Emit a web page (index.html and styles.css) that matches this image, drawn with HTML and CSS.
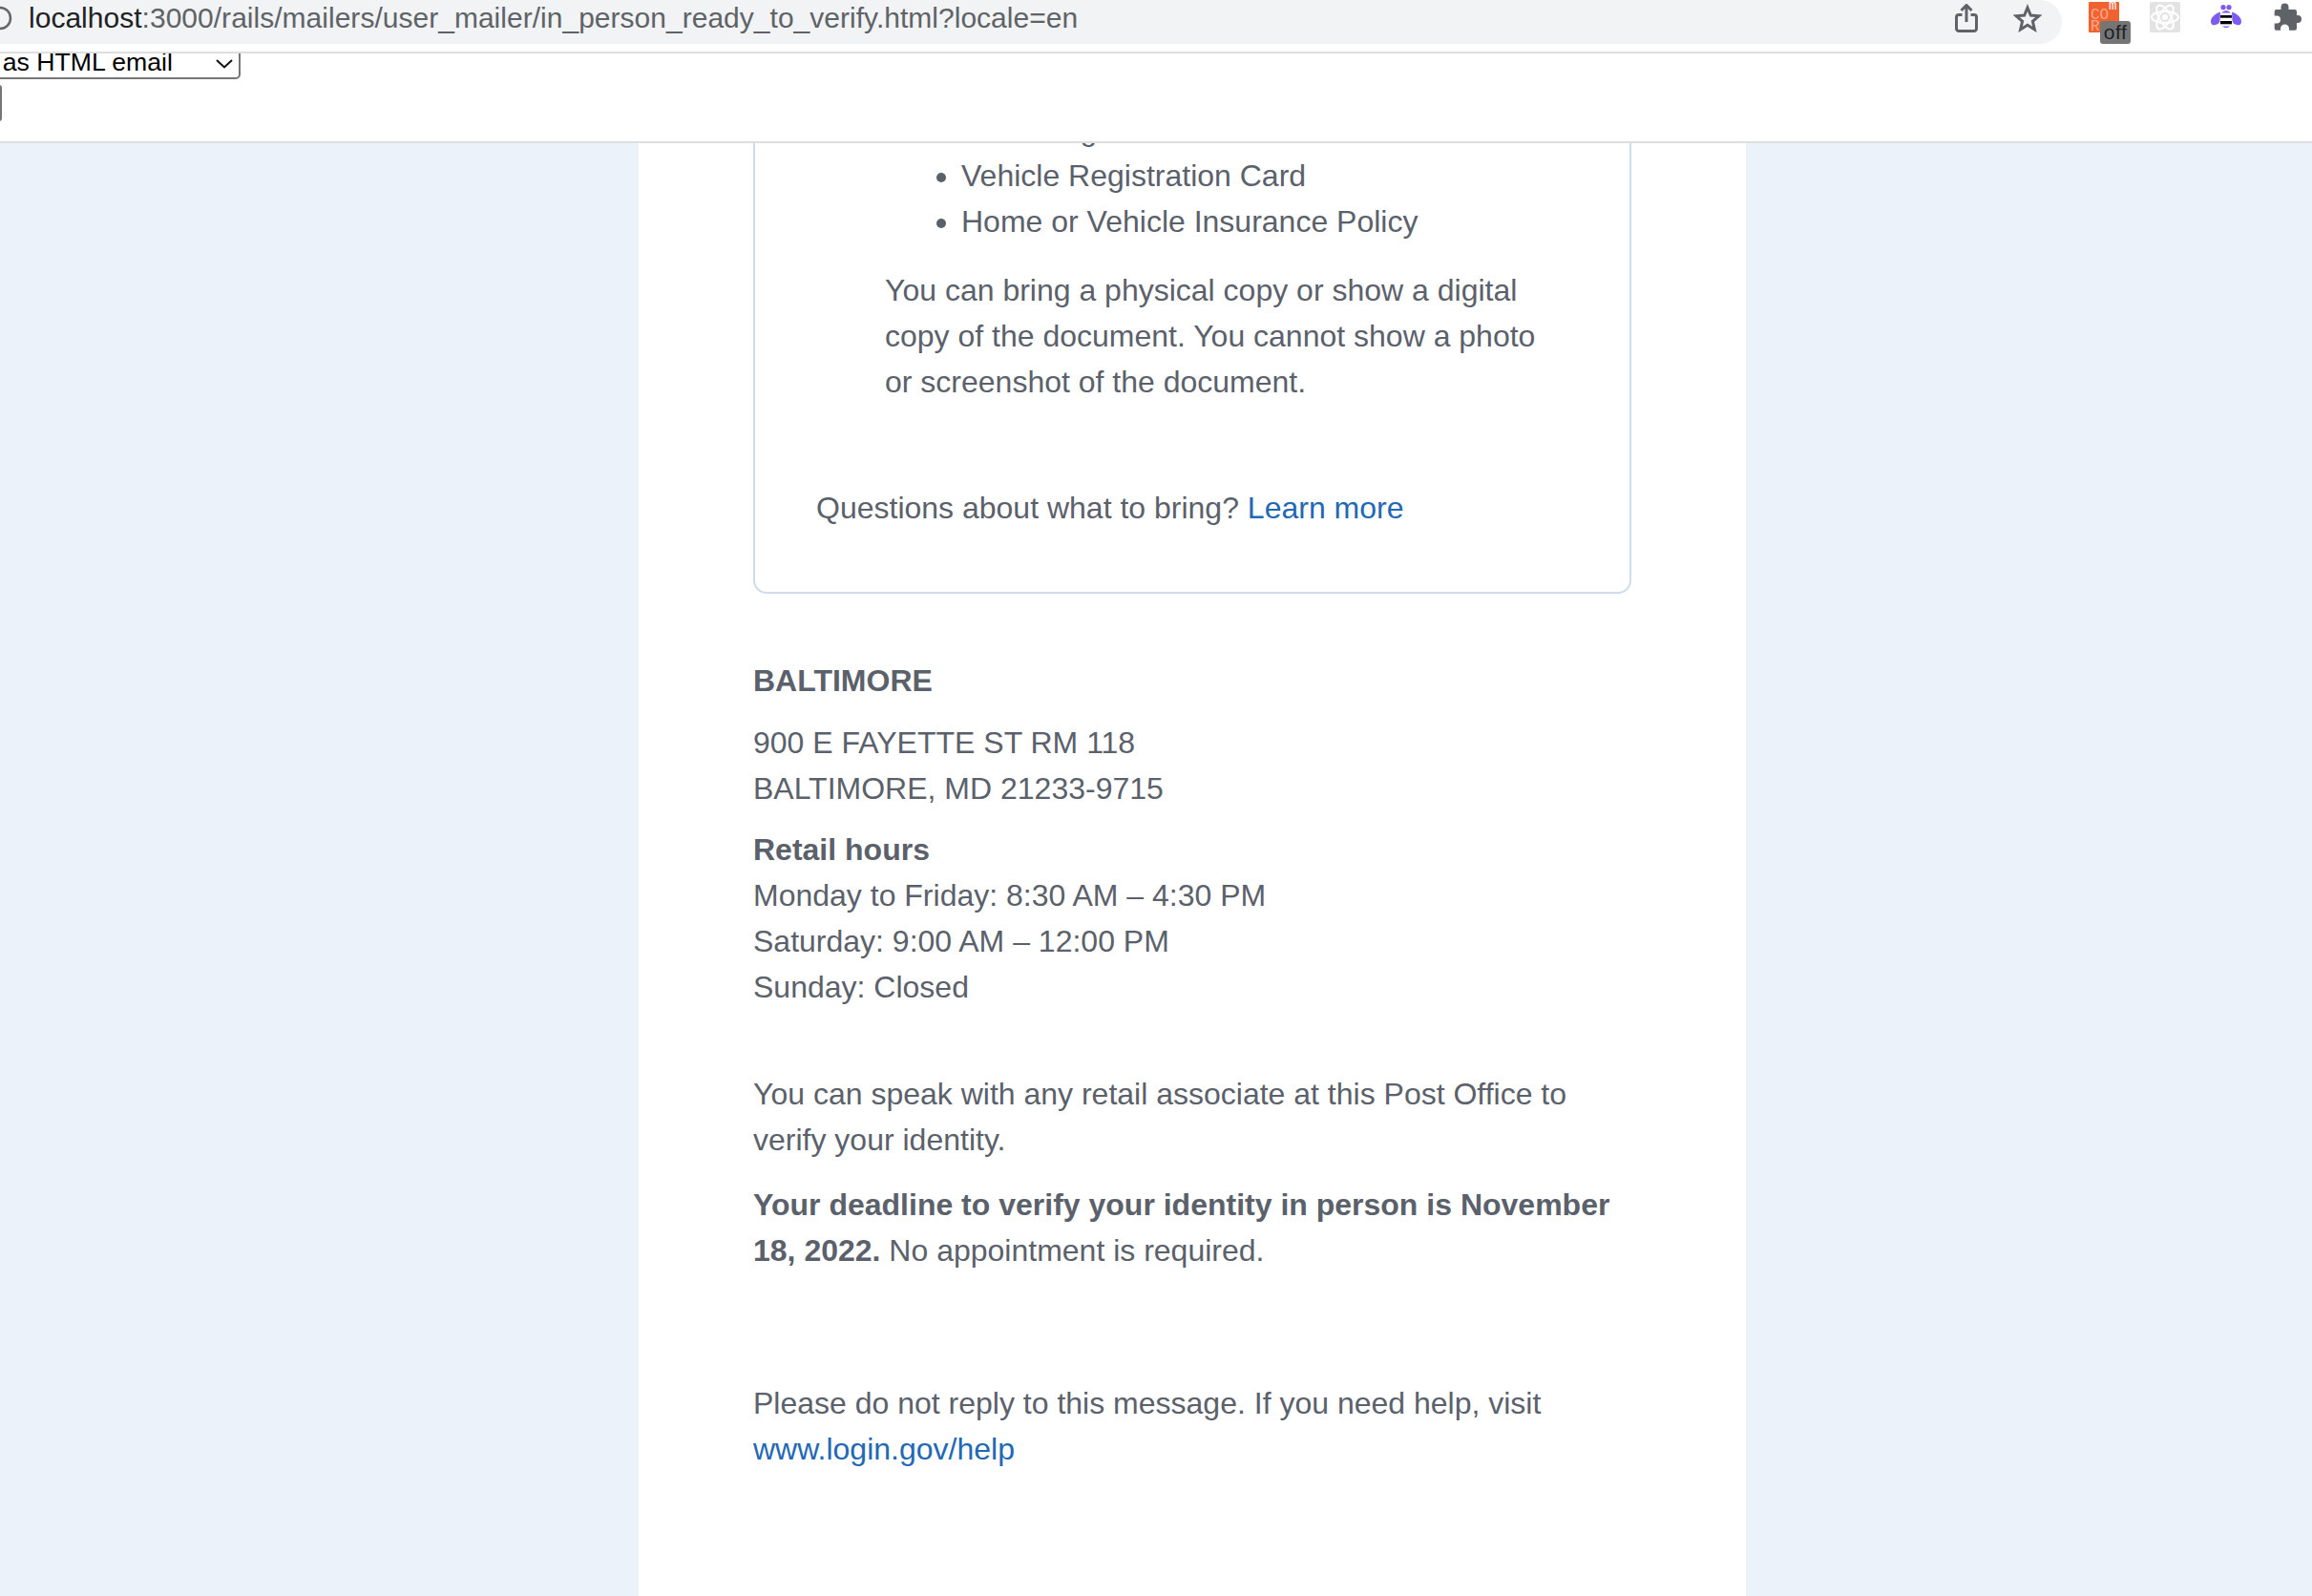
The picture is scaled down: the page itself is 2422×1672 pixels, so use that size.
FILE: index.html
```html
<!DOCTYPE html>
<html lang="en">
<head>
    <meta charset="UTF-8">
    <title>in_person_ready_to_verify</title>
    <link rel="stylesheet" href="styles.css">
</head>
<body>

    <!-- Browser toolbar -->
    <div class="browser-bar">
        <div class="address-bar">
            <svg class="reload-icon" width="14" height="30" viewBox="0 0 14 30"><circle cx="0" cy="15" r="11" fill="none" stroke="#666" stroke-width="2.500"/></svg>
            <div class="url"><span class="url-host">localhost</span>:3000/rails/mailers/user_mailer/in_person_ready_to_verify.html?locale=en</div>
            <svg class="share-icon" width="24" height="30" viewBox="0 0 24 30"><path d="M7.500 11.500H4a2.500 2.500 0 0 0-2.500 2.500v12A2.500 2.500 0 0 0 4 28.500h16a2.500 2.500 0 0 0 2.500-2.500V14a2.500 2.500 0 0 0-2.500-2.500h-3.500M12 19V2M6.500 7L12 1.500 17.500 7" fill="none" stroke="#5f6368" stroke-width="3"/></svg>
            <svg class="star-icon" width="30" height="30" viewBox="0 0 30 30"><path d="M15 4l3.300 8 8.700.7-6.600 5.700 2 8.500L15 22.300l-7.400 4.600 2-8.500L3 12.700l8.700-.7z" fill="none" stroke="#5f6368" stroke-width="3" stroke-linejoin="miter"/></svg>
        </div>
        <div class="extensions">
            <div class="ext">
                <svg width="32" height="32" viewBox="0 0 32 32"><rect width="32" height="32" rx="1" fill="#f26130"/><text x="2" y="18" class="cors-text">CO</text><text x="2" y="30" class="cors-text">R</text><text x="21" y="8" class="cors-m">m</text></svg>
                <span class="ext-badge">off</span>
            </div>
            <div class="ext">
                <svg width="32" height="32" viewBox="0 0 32 32"><rect width="32" height="32" rx="2" fill="#e3e3e3"/><g fill="none" stroke="#fff" stroke-width="2"><ellipse cx="16" cy="16" rx="14" ry="6"/><ellipse cx="16" cy="16" rx="14" ry="6" transform="rotate(60 16 16)"/><ellipse cx="16" cy="16" rx="14" ry="6" transform="rotate(120 16 16)"/></g><circle cx="16" cy="16" r="3" fill="#fff"/></svg>
            </div>
            <div class="ext">
                <svg width="32" height="32" viewBox="0 0 32 32"><g fill="#7f5af0"><circle cx="13" cy="5.700" r="2.600"/><circle cx="19" cy="5.700" r="2.600"/><path d="M10 10.500C5 12 0 16 0 20.500 0 24 3 25 5 24c3-1 4-2 4.500-4z"/><path d="M22 10.500c5 1.500 10 5.500 10 10 0 3.500-3 4.500-5 3.500-3-1-4-2-4.500-4z"/><path d="M11 11.500q5-5 10 0z"/><path d="M12 25.500h8q-4 3-8 0z"/></g><rect x="10" y="14" width="12" height="2.700" fill="#000"/><rect x="10" y="20" width="12" height="3.300" fill="#000"/></svg>
            </div>
            <div class="ext">
                <svg width="32" height="32" viewBox="0 0 32 32"><path d="M4.700 8H9.500V5.500a4 4 0 0 1 8 0V8H24a2 2 0 0 1 2 2v4h1a4 4 0 0 1 0 8h-1v5.700a2 2 0 0 1-2 2H18V28a4.500 4.500 0 0 0-9 0v1.700H4.700a2 2 0 0 1-2-2V22.500H5a4 4 0 0 0 0-8H2.700V10a2 2 0 0 1 2-2z" fill="#5f6368"/></svg>
            </div>
        </div>
    </div>

    <!-- Mailer preview header -->
    <div class="preview-head">
        <div class="select-wrap">
            <select class="format-select">
                <option>View as HTML email</option>
            </select>
            <svg class="select-chevron" width="18" height="10" viewBox="0 0 18 10"><path d="M1 1l8 7.500L17 1" fill="none" stroke="#111" stroke-width="2"/></svg>
        </div>
        <input class="to-input" type="text">
    </div>

    <!-- Email body -->
    <div class="mail-bg">
        <div class="mail-col">
            <div class="card">
                <ul class="doc-list">
                    <li>Voter Registration Card</li>
                    <li>Vehicle Registration Card</li>
                    <li>Home or Vehicle Insurance Policy</li>
                </ul>
                <p class="doc-note">You can bring a physical copy or show a digital copy of the document. You cannot show a photo or screenshot of the document.</p>
                <p class="card-foot">Questions about what to bring? <a href="#">Learn more</a></p>
            </div>

            <h2 class="office-name">BALTIMORE</h2>
            <p class="address">900 E FAYETTE ST RM 118<br>BALTIMORE, MD 21233-9715</p>
            <p class="hours"><strong>Retail hours</strong><br>Monday to Friday: 8:30 AM – 4:30 PM<br>Saturday: 9:00 AM – 12:00 PM<br>Sunday: Closed</p>

            <p class="speak">You can speak with any retail associate at this Post Office to verify your identity.</p>
            <p class="deadline"><strong>Your deadline to verify your identity in person is November 18, 2022.</strong> No appointment is required.</p>

            <p class="help">Please do not reply to this message. If you need help, visit <a href="#">www.login.gov/help</a></p>
        </div>
    </div>

</body>
</html>
```

FILE: styles.css
```css
body {
    margin: 0;
    height: 1672px;
    overflow: hidden;
    background-color: #fff;
    font-family: "Liberation Sans", Arial, sans-serif;
}

/* Browser toolbar */
.browser-bar {
    display: flex;
    height: 54px;
    border-bottom: 2px solid #dedede;
}

.address-bar {
    display: flex;
    align-items: center;
    width: 2160px;
    height: 46px;
    background-color: #f1f3f4;
    border-radius: 0 23px 23px 0;
}

.reload-icon {
    margin-top: -8px;
}

.url {
    margin-left: 16px;
    margin-top: -9px;
    flex: 1;
    font-size: 30px;
    letter-spacing: 0.02px;
    color: #5f6368;
    white-space: nowrap;
}

.url-host {
    color: #202124;
}

.share-icon {
    margin-top: -9px;
}

.star-icon {
    margin: -9px 21px 0 37px;
}

.extensions {
    display: flex;
    gap: 32px;
    margin-left: 28px;
    padding-top: 2px;
}

.ext {
    position: relative;
    width: 32px;
    height: 32px;
}

.ext svg {
    display: block;
}

.cors-text {
    font-family: "Liberation Mono", monospace;
    font-size: 16px;
    fill: #f9a988;
}

.cors-m {
    font-family: "Liberation Mono", monospace;
    font-size: 14px;
    fill: #fff;
}

.ext-badge {
    position: absolute;
    left: 12px;
    top: 20px;
    width: 32px;
    height: 24px;
    border-radius: 3px;
    background-color: #757575;
    color: #202124;
    font-size: 21px;
    line-height: 24px;
    letter-spacing: 0.5px;
    text-align: center;
}

/* Mailer preview header */
.preview-head {
    height: 92px;
    border-bottom: 2px solid #dedede;
    overflow: hidden;
}

.select-wrap {
    position: relative;
}

.format-select {
    display: block;
    width: 320px;
    height: 36px;
    margin: -9px 0 0 -68px;
    padding: 0 0 0 4px;
    appearance: none;
    font-family: "Liberation Sans", Arial, sans-serif;
    font-size: 26.67px;
    color: #000;
    background-color: #fff;
    border: 2px solid #767676;
    border-radius: 5px;
}

.select-chevron {
    position: absolute;
    left: 226px;
    top: 15px;
}

.to-input {
    display: block;
    width: 200px;
    height: 38px;
    box-sizing: border-box;
    margin: 6px 0 0 -198px;
    border: 2px solid #767676;
    border-radius: 3px;
}

/* Email body */
.mail-bg {
    height: 1522px;
    padding-left: 669px;
    background-color: #ebf2f9;
    overflow: hidden;
}

.mail-col {
    width: 920px;
    min-height: 1700px;
    padding: 0 120px;
    background-color: #fff;
    font-size: 32px;
    line-height: 48px;
    color: #5b616b;
    overflow: hidden;
}

.mail-col p {
    margin: 0;
}

.mail-col a {
    color: #2268b5;
    text-decoration: none;
}

.card {
    box-sizing: border-box;
    width: 920px;
    margin-top: -63px;
    padding: 23px 66px 64px 64px;
    border: 2px solid #d0dcea;
    border-radius: 14px;
}

.doc-list {
    margin: 0;
    padding-left: 152px;
}

.mail-col .doc-note {
    margin: 24px 0 0 72px;
}

.mail-col .card-foot {
    margin-top: 84px;
}

.office-name {
    margin: 67px 0 0;
    font-size: 32px;
    line-height: 48px;
    font-weight: bold;
}

.mail-col .address {
    margin-top: 17px;
}

.mail-col .hours {
    margin-top: 16px;
}

.mail-col .speak {
    margin-top: 64px;
}

.mail-col .deadline {
    margin-top: 20px;
}

.mail-col .help {
    margin-top: 112px;
}
```
